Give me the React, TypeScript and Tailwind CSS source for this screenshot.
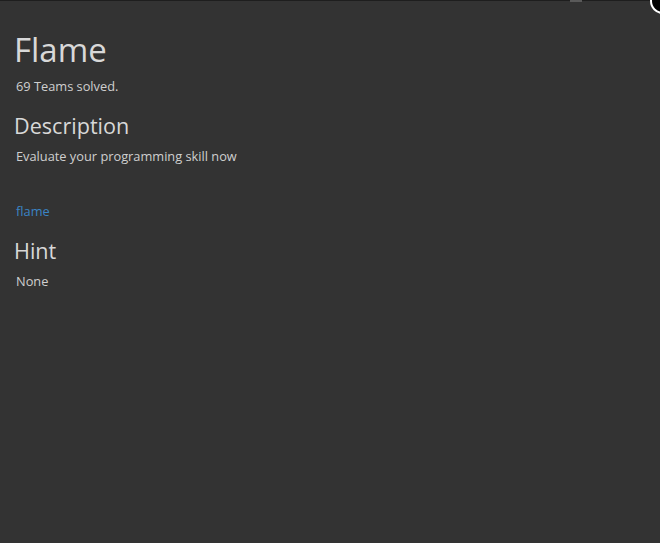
export default function App() {
  return (
    <div className="relative h-[543px] w-[660px] overflow-hidden bg-[#333333] font-['Open_Sans',sans-serif]">
      {/* top edge */}
      <div className="h-px w-full bg-[#1e1e1e]" />
      <div className="absolute left-[570px] top-0 h-[2px] w-[12px] bg-[#5a5a5a]" />

      {/* close button, mostly off screen */}
      <div className="absolute left-[650px] top-[-12px] h-[26px] w-[26px] rounded-full border-2 border-white bg-black" />

      <div className="flex flex-col pl-[14px] pt-[29px]">
        <h1 className="text-[33px] leading-[40px] text-[#d8d8d8]">Flame</h1>
        <p className="ml-[2px] mt-[6px] text-[12.8px] leading-[20px] text-[#cfcfcf]">69 Teams solved.</p>

        <h2 className="mt-[15px] text-[21.6px] leading-[30px] text-[#d8d8d8]">Description</h2>
        <p className="ml-[2px] mt-[5px] text-[12.8px] leading-[20px] text-[#cfcfcf]">
          Evaluate your programming skill now
        </p>

        <a href="#" className="ml-[2px] mt-[35px] text-[12.8px] leading-[20px] text-[#3a84c4]">
          flame
        </a>

        <h2 className="mt-[15px] text-[21.6px] leading-[30px] text-[#d8d8d8]">Hint</h2>
        <p className="ml-[2px] mt-[5px] text-[12.8px] leading-[20px] text-[#cfcfcf]">None</p>
      </div>
    </div>
  );
}
